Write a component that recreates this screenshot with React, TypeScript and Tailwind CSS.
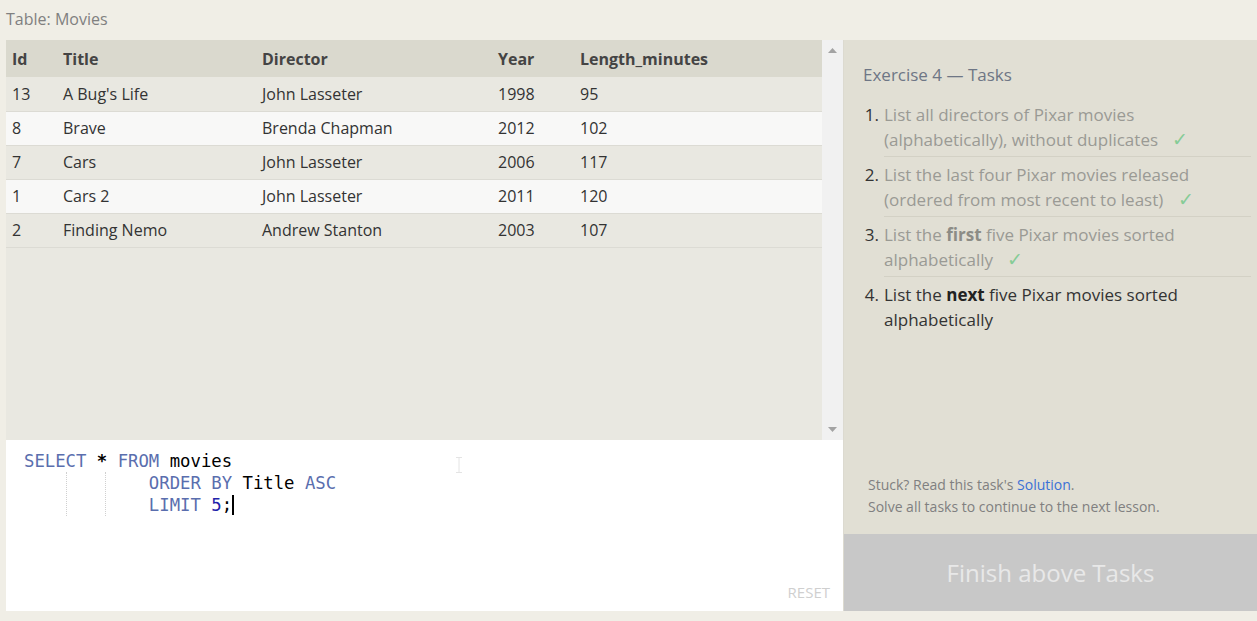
import React from 'react';

type Movie = { id: number; title: string; director: string; year: number; length: number };

const movies: Movie[] = [
  { id: 13, title: "A Bug's Life", director: 'John Lasseter', year: 1998, length: 95 },
  { id: 8, title: 'Brave', director: 'Brenda Chapman', year: 2012, length: 102 },
  { id: 7, title: 'Cars', director: 'John Lasseter', year: 2006, length: 117 },
  { id: 1, title: 'Cars 2', director: 'John Lasseter', year: 2011, length: 120 },
  { id: 2, title: 'Finding Nemo', director: 'Andrew Stanton', year: 2003, length: 107 },
];

const Check = () => (
  <span className="ml-[10px] text-[#86cc96] font-['DejaVu_Sans',sans-serif] text-[19px] leading-none font-light">✓</span>
);

const Task: React.FC<{ n: number; done?: boolean; last?: boolean; children: React.ReactNode }> = ({ n, done, last, children }) => (
  <li className="flex">
    <span className="w-[16px] shrink-0 text-right text-[#333]">{n}.</span>
    <div
      className={`ml-[5px] flex-1 pb-[4px] mb-[5px] ${last ? '' : 'border-b border-[#d3d1c5]'} ${
        done ? 'text-[#9a9a94]' : 'text-[#333]'
      }`}
    >
      {children}
    </div>
  </li>
);

export default function App() {
  return (
    <div className="w-[1257px] h-[621px] bg-[#f0eee6] font-['Open_Sans',sans-serif] overflow-hidden">
      <div className="h-[40px] pl-[6px] pt-[7px] text-[16px] text-[#808080]">Table: Movies</div>

      <div className="flex h-[571px] pl-[6px]">
        {/* Left: table + editor */}
        <div className="w-[837px] flex flex-col">
          <div className="flex h-[400px] bg-[#e9e8e1]">
            <div className="flex-1">
              <table className="w-full border-collapse text-[16px] text-[#333]">
                <thead>
                  <tr className="h-[37px] bg-[#dad9ce] text-[#444] font-bold text-left">
                    <th className="w-[57px] pl-[6px] font-bold">Id</th>
                    <th className="w-[199px] font-bold">Title</th>
                    <th className="w-[236px] font-bold">Director</th>
                    <th className="w-[82px] font-bold">Year</th>
                    <th className="font-bold">Length_minutes</th>
                  </tr>
                </thead>
                <tbody>
                  {movies.map((m, i) => (
                    <tr
                      key={m.id}
                      className={`h-[34px] border-b border-[#dcdbd4] ${i % 2 === 0 ? 'bg-[#e9e8e1]' : 'bg-[#f8f8f7]'}`}
                    >
                      <td className="pl-[6px]">{m.id}</td>
                      <td>{m.title}</td>
                      <td>{m.director}</td>
                      <td>{m.year}</td>
                      <td>{m.length}</td>
                    </tr>
                  ))}
                </tbody>
              </table>
            </div>
            {/* scrollbar */}
            <div className="w-[21px] bg-[#f1f1f1] flex flex-col justify-between items-center py-[8px]">
              <svg width="9" height="5" viewBox="0 0 9 5"><path d="M0 5 L4.5 0 L9 5 Z" fill="#a3a3a3" /></svg>
              <svg width="9" height="5" viewBox="0 0 9 5"><path d="M0 0 L9 0 L4.5 5 Z" fill="#a3a3a3" /></svg>
            </div>
          </div>

          {/* Editor */}
          <div className="relative h-[171px] bg-white pl-[18px] pt-[10px] font-['DejaVu_Sans_Mono',monospace] text-[17.3px] leading-[22px] text-black">
            <div className="whitespace-pre">
              <span className="text-[#5a6eae]">SELECT</span> <span className="font-bold">*</span>{' '}
              <span className="text-[#5a6eae]">FROM</span> movies
            </div>
            <div className="whitespace-pre relative">
              <span className="absolute left-[42px] top-[0px] h-[44px] border-l border-dotted border-[#d0d0d0]" />
              <span className="absolute left-[81px] top-[0px] h-[44px] border-l border-dotted border-[#d0d0d0]" />
              {'            '}
              <span className="text-[#5a6eae]">ORDER BY</span> Title <span className="text-[#5a6eae]">ASC</span>
            </div>
            <div className="whitespace-pre">
              {'            '}
              <span className="text-[#5a6eae]">LIMIT</span> <span className="text-[#2222aa]">5</span>;
              <span className="inline-block w-[2px] h-[20px] bg-black align-[-4px]" />
            </div>
            <svg className="absolute left-[449px] top-[17px]" width="8" height="16" viewBox="0 0 8 16">
              <path d="M1 0.5 H7 M4 0.5 V15.5 M1 15.5 H7" stroke="#e4e4e4" strokeWidth="1" fill="none" />
            </svg>
            <div className="absolute right-[13px] bottom-[8px] font-['Open_Sans',sans-serif] text-[15px] text-[#cfcfcf]">
              RESET
            </div>
          </div>
        </div>

        {/* Right: tasks */}
        <div className="w-[414px] flex flex-col border-l border-[#dcdad0]">
          <div className="flex-1 bg-[#e1dfd4] flex flex-col justify-between pl-[19px] pr-[6px]">
            <div>
              <div className="pt-[22px] text-[17px] text-[#6e7685]">Exercise 4 — Tasks</div>
              <ol className="mt-[14px] text-[17px] leading-[25px]">
                <Task n={1} done>
                  List all directors of Pixar movies
                  <br />
                  (alphabetically), without duplicates <Check />
                </Task>
                <Task n={2} done>
                  List the last four Pixar movies released
                  <br />
                  (ordered from most recent to least) <Check />
                </Task>
                <Task n={3} done>
                  List the <b className="text-[#8c8c86]">first</b> five Pixar movies sorted
                  <br />
                  alphabetically <Check />
                </Task>
                <Task n={4} last>
                  List the <b className="text-[#222]">next</b> five Pixar movies sorted
                  <br />
                  alphabetically
                </Task>
              </ol>
            </div>
            <div className="pl-[5px] pb-[16px] text-[14px] leading-[22px] text-[#808080]">
              <div>
                Stuck? Read this task's <span className="text-[#3b71d6]">Solution</span>.
              </div>
              <div>Solve all tasks to continue to the next lesson.</div>
            </div>
          </div>
          <div className="h-[77px] bg-[#c8c8c8] flex items-center justify-center text-[24px] text-[#e8e8e8]">
            Finish above Tasks
          </div>
        </div>
      </div>
    </div>
  );
}
